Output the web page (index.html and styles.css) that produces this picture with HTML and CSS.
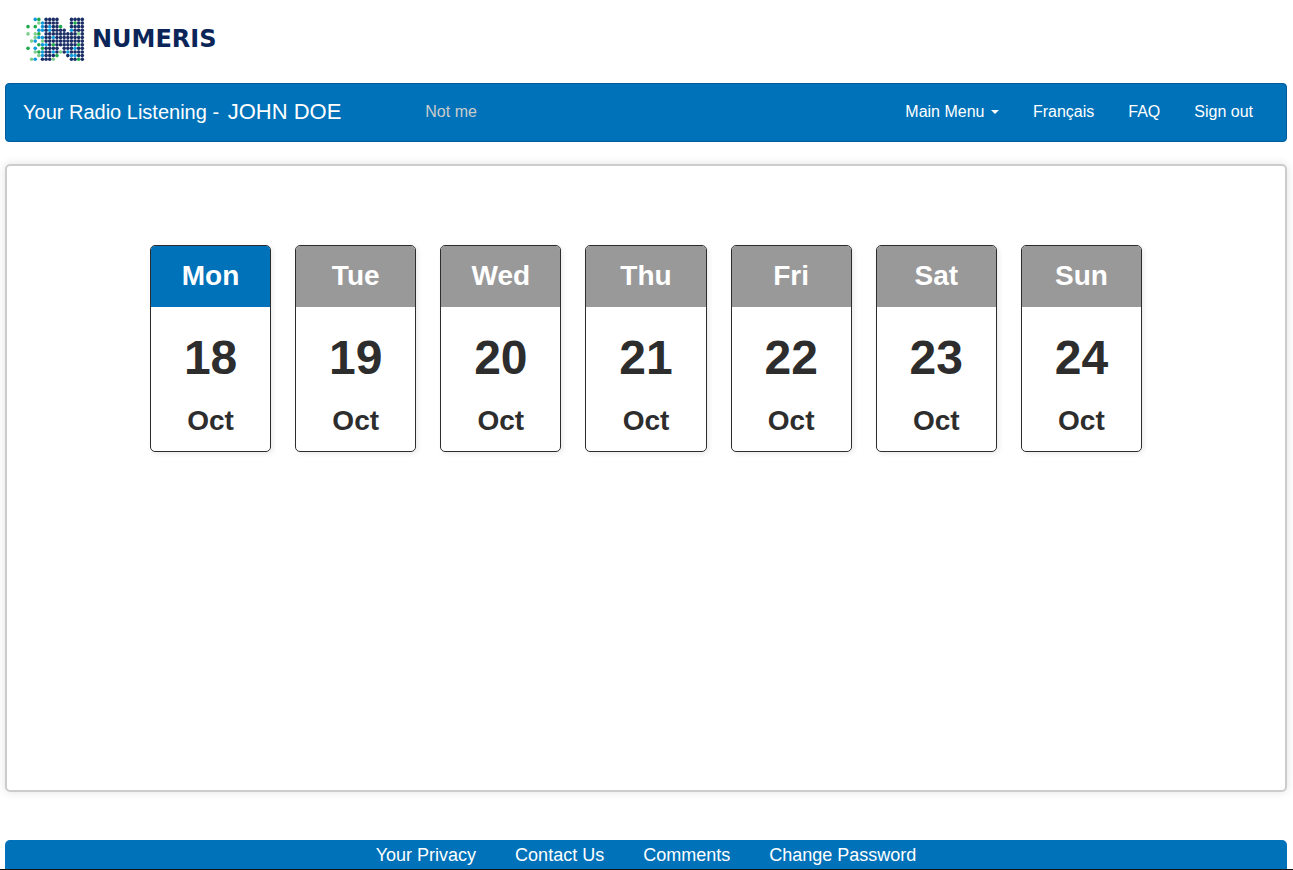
FILE: index.html
```
<!DOCTYPE html>
<html lang="en">
<head>
  <meta charset="UTF-8" />
  <meta name="viewport" content="width=device-width, initial-scale=1.0"/>
  <title>Numeris - Your Radio Listening</title>
  <link rel="stylesheet" href="styles.css">
</head>
<body>
  <header class="site-header">
    <a class="logo" href="#">
      <svg class="logo-mark" id="logo-mark" viewBox="0 0 60 46" aria-hidden="true"></svg>
      <span class="logo-text">NUMERIS</span>
    </a>
  </header>

  <nav class="navbar">
    <div class="navbar-brand">Your Radio Listening - <span class="user-name">JOHN DOE</span></div>
    <a class="not-me" href="#">Not me</a>
    <ul class="navbar-links">
      <li><button class="menu-toggle" type="button">Main Menu <span class="caret"></span></button></li>
      <li><a href="#">Français</a></li>
      <li><a href="#">FAQ</a></li>
      <li><a href="#">Sign out</a></li>
    </ul>
  </nav>

  <main class="panel">
    <div class="days">
      <a class="day active" href="#">
        <span class="day-name">Mon</span>
        <span class="day-number">18</span>
        <span class="day-month">Oct</span>
      </a>
      <a class="day" href="#">
        <span class="day-name">Tue</span>
        <span class="day-number">19</span>
        <span class="day-month">Oct</span>
      </a>
      <a class="day" href="#">
        <span class="day-name">Wed</span>
        <span class="day-number">20</span>
        <span class="day-month">Oct</span>
      </a>
      <a class="day" href="#">
        <span class="day-name">Thu</span>
        <span class="day-number">21</span>
        <span class="day-month">Oct</span>
      </a>
      <a class="day" href="#">
        <span class="day-name">Fri</span>
        <span class="day-number">22</span>
        <span class="day-month">Oct</span>
      </a>
      <a class="day" href="#">
        <span class="day-name">Sat</span>
        <span class="day-number">23</span>
        <span class="day-month">Oct</span>
      </a>
      <a class="day" href="#">
        <span class="day-name">Sun</span>
        <span class="day-number">24</span>
        <span class="day-month">Oct</span>
      </a>
    </div>
  </main>

  <footer class="site-footer">
    <a href="#">Your Privacy</a>
    <a href="#">Contact Us</a>
    <a href="#">Comments</a>
    <a href="#">Change Password</a>
  </footer>

  <script src="logo.js"></script>
</body>
</html>
```

FILE: styles.css
```
* { margin: 0; padding: 0; box-sizing: border-box; }

body {
  min-height: 100vh;
  display: flex;
  flex-direction: column;
  font-family: "Liberation Sans", Arial, sans-serif;
  font-size: 16px;
  color: #2d2d2d;
  background: #fff;
  border-bottom: 1px solid #111;
}

a { color: inherit; text-decoration: none; }

/* Logo */
.site-header {
  height: 83px;
  padding: 16px 25px;
}

.logo {
  display: inline-flex;
  align-items: center;
  gap: 7px;
}

.logo-mark {
  width: 60px;
  height: 46px;
}

.logo-text {
  font-family: "DejaVu Sans", sans-serif;
  font-size: 24px;
  font-weight: bold;
  line-height: 46px;
  color: #0b2559;
}

/* Top bar */
.navbar {
  display: flex;
  align-items: center;
  height: 59px;
  margin: 0 6px 22px 5px;
  padding: 0 16px 2px 17px;
  color: #fff;
  background: #0072b9;
  border: 1px solid #005b9c;
  border-radius: 4px;
}

.navbar-brand {
  font-size: 20px;
  line-height: 24px;
}

.user-name {
  margin-left: 3px;
  font-size: 22px;
}

.not-me {
  margin-left: 84px;
  color: #ccc;
}

.navbar-links {
  display: flex;
  margin-left: auto;
  list-style: none;
}

.navbar-links a,
.menu-toggle {
  display: block;
  padding: 0 17px;
  line-height: 20px;
}

.menu-toggle {
  font-family: inherit;
  font-size: 16px;
  color: inherit;
  background: none;
  border: 0;
  cursor: pointer;
}

.caret {
  display: inline-block;
  margin-left: 2px;
  vertical-align: middle;
  border-top: 4px solid #fff;
  border-left: 4px solid transparent;
  border-right: 4px solid transparent;
}

/* Week */
.panel {
  flex: 1;
  margin: 0 6px 48px 5px;
  padding: 79px 143px;
  border: 2px solid #ccc;
  border-radius: 5px;
  box-shadow: 0 0 10px rgba(0, 0, 0, 0.12);
}

.days {
  display: grid;
  grid-template-columns: repeat(7, 1fr);
  gap: 24px;
}

.day {
  display: flex;
  flex-direction: column;
  overflow: hidden;
  padding-bottom: 18px;
  font-weight: bold;
  text-align: center;
  border: 1px solid #2d2d2d;
  border-radius: 5px;
  box-shadow: 2px 2px 5px rgba(0, 0, 0, 0.08);
}

.day-name {
  padding-bottom: 1px;
  font-size: 28px;
  line-height: 60px;
  color: #fff;
  background: #999;
}

.day.active .day-name { background: #0072b9; }

.day-number {
  font-size: 48px;
  line-height: 102px;
}

.day-month {
  font-size: 28px;
  line-height: 24px;
}

/* Bottom bar */
.site-footer {
  display: flex;
  justify-content: center;
  gap: 39px;
  margin: 0 6px 0 5px;
  padding-top: 1px;
  font-size: 18px;
  line-height: 28px;
  color: #fff;
  background: #0072b9;
  border-radius: 5px 5px 0 0;
}
```

FILE: logo.js
```
// n navy, b blue, g green, l light green
const rows = [
  '..bg.nnnn...nnnn',
  '...lbnnnn...ngnn',
  'g.g.bnbnng..nnnn',
  '...bbnbnnnn.bnnn',
  'l.lg.nnnnnnnnnln',
  '..lbbnnbnnnnnnnn',
  '.lb.lnnnnnnnnnnn',
  '...gbbngnnnnnngn',
  'g.b.gnnnn.nnnbnn',
  '..lgbnnbnlnbnnnn',
  '...lbnnng..nbbnn',
  '.lb.nnnl....nngn'
];
const colors = { n: '#1b2f66', b: '#129bdb', g: '#1faa4b', l: '#7fce8d' };
const mark = document.getElementById('logo-mark');

rows.forEach((row, y) => {
  [...row].forEach((key, x) => {
    if (!colors[key]) return;
    const dot = document.createElementNS('http://www.w3.org/2000/svg', 'circle');
    dot.setAttribute('cx', 3 + x * 3.62);
    dot.setAttribute('cy', 3.4 + y * 3.62);
    dot.setAttribute('r', 1.8);
    dot.setAttribute('fill', colors[key]);
    mark.appendChild(dot);
  });
});
```
